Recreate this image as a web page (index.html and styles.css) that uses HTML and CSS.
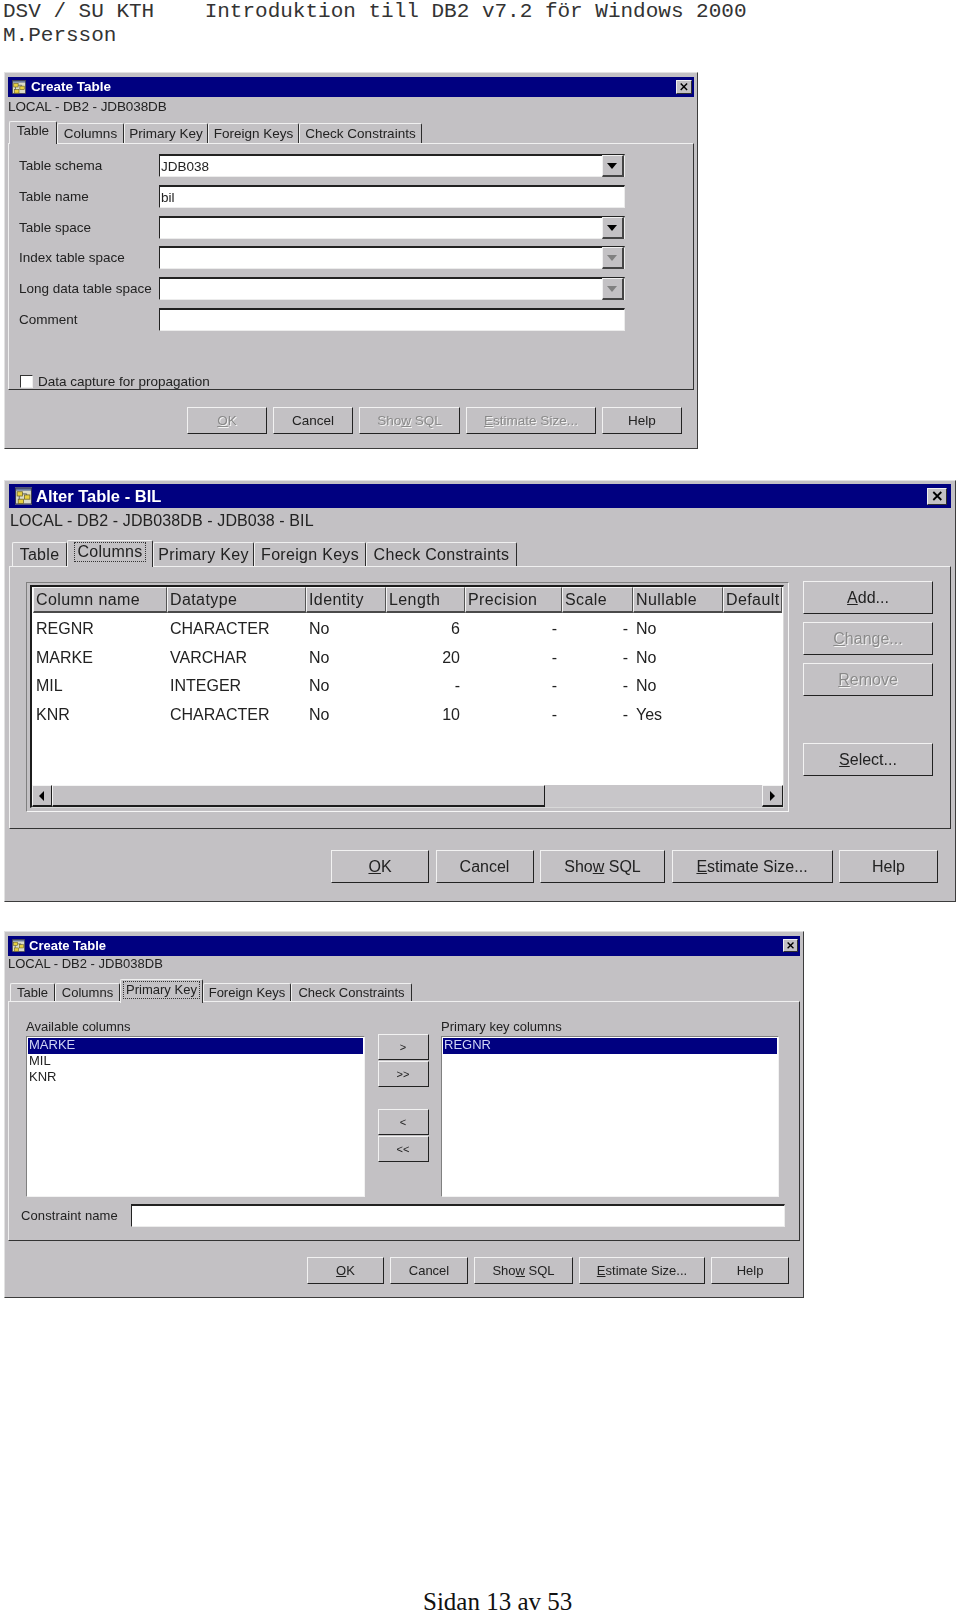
FILE: index.html
```html
<!DOCTYPE html>
<html lang="sv">
<head>
<meta charset="utf-8">
<title>Introduktion till DB2</title>
<link rel="stylesheet" href="styles.css">
</head>
<body>
<svg class="defs" width="0" height="0" aria-hidden="true">
  <symbol id="app" viewBox="0 0 16 16">
    <rect x="0" y="0" width="16" height="16" fill="#dcdcc8"/>
    <rect x="0" y="0" width="16" height="3" fill="#6a7a9a"/>
    <rect x="0.5" y="0.5" width="15" height="15" fill="none" stroke="#3a3a50"/>
    <rect x="2" y="4" width="5" height="4" fill="#e8d040" stroke="#6a6020" stroke-width="0.7"/>
    <rect x="9" y="7" width="5" height="4" fill="#e8d040" stroke="#6a6020" stroke-width="0.7"/>
    <rect x="3" y="11" width="5" height="4" fill="#e8d040" stroke="#6a6020" stroke-width="0.7"/>
    <path d="M4 8v3M7 6h4v1" fill="none" stroke="#505050" stroke-width="0.8"/>
  </symbol>
  <symbol id="x" viewBox="0 0 12 12">
    <path d="M2 2l8 8M10 2l-8 8" fill="none" stroke="#000" stroke-width="1.8"/>
  </symbol>
</svg>

<header class="page-head">
  <div class="head-line">DSV / SU KTH    Introduktion till DB2 v7.2 för Windows 2000</div>
  <div class="head-line">M.Persson</div>
</header>

<section class="win win-a">
  <div class="titlebar">
    <svg class="app-icon"><use href="#app"/></svg>
    <span class="title">Create Table</span>
    <span class="close"><svg><use href="#x"/></svg></span>
  </div>
  <div class="subtitle">LOCAL - DB2 - JDB038DB</div>
  <div class="tabs">
    <div class="tab active">Table</div>
    <div class="tab">Columns</div>
    <div class="tab">Primary Key</div>
    <div class="tab">Foreign Keys</div>
    <div class="tab">Check Constraints</div>
  </div>
  <div class="panel">
    <div class="form">
      <label>Table schema</label>
      <div class="field combo">JDB038<span class="drop"></span></div>
      <label>Table name</label>
      <div class="field">bil</div>
      <label>Table space</label>
      <div class="field combo"><span class="drop"></span></div>
      <label>Index table space</label>
      <div class="field combo"><span class="drop off"></span></div>
      <label>Long data table space</label>
      <div class="field combo"><span class="drop off"></span></div>
      <label>Comment</label>
      <div class="field"></div>
    </div>
    <div class="check-row"><span class="check"></span>Data capture for propagation</div>
  </div>
  <div class="actions">
    <button class="btn off"><u>O</u>K</button>
    <button class="btn">Cancel</button>
    <button class="btn off">Sho<u>w</u> SQL</button>
    <button class="btn off"><u>E</u>stimate Size...</button>
    <button class="btn">Help</button>
  </div>
</section>

<section class="win win-b">
  <div class="titlebar">
    <svg class="app-icon"><use href="#app"/></svg>
    <span class="title">Alter Table - BIL</span>
    <span class="close"><svg><use href="#x"/></svg></span>
  </div>
  <div class="subtitle">LOCAL - DB2 - JDB038DB - JDB038 - BIL</div>
  <div class="tabs">
    <div class="tab">Table</div>
    <div class="tab active"><span class="focus">Columns</span></div>
    <div class="tab">Primary Key</div>
    <div class="tab">Foreign Keys</div>
    <div class="tab">Check Constraints</div>
  </div>
  <div class="panel panel-row">
    <div class="tbl">
      <div class="tbl-inner">
        <div class="cols head">
          <div>Column name</div><div>Datatype</div><div>Identity</div><div>Length</div><div>Precision</div><div>Scale</div><div>Nullable</div><div>Default</div>
        </div>
        <div class="rows">
          <div class="cols"><div>REGNR</div><div>CHARACTER</div><div>No</div><div class="num">6</div><div class="num">-</div><div class="num">-</div><div>No</div><div></div></div>
          <div class="cols"><div>MARKE</div><div>VARCHAR</div><div>No</div><div class="num">20</div><div class="num">-</div><div class="num">-</div><div>No</div><div></div></div>
          <div class="cols"><div>MIL</div><div>INTEGER</div><div>No</div><div class="num">-</div><div class="num">-</div><div class="num">-</div><div>No</div><div></div></div>
          <div class="cols"><div>KNR</div><div>CHARACTER</div><div>No</div><div class="num">10</div><div class="num">-</div><div class="num">-</div><div>Yes</div><div></div></div>
        </div>
        <div class="scrollbar">
          <span class="sb-btn sb-left"></span>
          <span class="sb-thumb"></span>
          <span class="sb-track"></span>
          <span class="sb-btn sb-right"></span>
        </div>
      </div>
    </div>
    <div class="side">
      <button class="btn"><u>A</u>dd...</button>
      <button class="btn off"><u>C</u>hange...</button>
      <button class="btn off"><u>R</u>emove</button>
      <button class="btn side-last"><u>S</u>elect...</button>
    </div>
  </div>
  <div class="actions">
    <button class="btn"><u>O</u>K</button>
    <button class="btn">Cancel</button>
    <button class="btn">Sho<u>w</u> SQL</button>
    <button class="btn"><u>E</u>stimate Size...</button>
    <button class="btn">Help</button>
  </div>
</section>

<section class="win win-c">
  <div class="titlebar">
    <svg class="app-icon"><use href="#app"/></svg>
    <span class="title">Create Table</span>
    <span class="close"><svg><use href="#x"/></svg></span>
  </div>
  <div class="subtitle">LOCAL - DB2 - JDB038DB</div>
  <div class="tabs">
    <div class="tab">Table</div>
    <div class="tab">Columns</div>
    <div class="tab active"><span class="focus">Primary Key</span></div>
    <div class="tab">Foreign Keys</div>
    <div class="tab">Check Constraints</div>
  </div>
  <div class="panel">
    <div class="keys">
      <div class="key-col">
        <div class="key-label">Available columns</div>
        <div class="list">
          <div class="item selected">MARKE</div>
          <div class="item">MIL</div>
          <div class="item">KNR</div>
        </div>
      </div>
      <div class="movers">
        <button class="btn">&gt;</button>
        <button class="btn">&gt;&gt;</button>
        <button class="btn mover-gap">&lt;</button>
        <button class="btn">&lt;&lt;</button>
      </div>
      <div class="key-col">
        <div class="key-label">Primary key columns</div>
        <div class="list">
          <div class="item selected">REGNR</div>
        </div>
      </div>
    </div>
    <div class="constraint">
      <label>Constraint name</label>
      <div class="field"></div>
    </div>
  </div>
  <div class="actions">
    <button class="btn"><u>O</u>K</button>
    <button class="btn">Cancel</button>
    <button class="btn">Sho<u>w</u> SQL</button>
    <button class="btn"><u>E</u>stimate Size...</button>
    <button class="btn">Help</button>
  </div>
</section>

<footer class="page-foot">Sidan 13 av 53</footer>
</body>
</html>
```

FILE: styles.css
```css
* { box-sizing: border-box; }

html, body { margin: 0; padding: 0; background: #fff; }

body { height: 1613px; overflow: hidden; }

.defs { display: block; height: 0; }

.page-head {
  height: 47px;
  padding-left: 3px;
  font: 21px/24px "Liberation Mono", monospace;
  color: #333;
}

.head-line { white-space: pre; }

.page-foot {
  margin-top: 291px;
  padding-left: 423px;
  font: 25px/25px "Liberation Serif", serif;
  color: #111;
}

/* window frame */
.win {
  display: flex;
  flex-direction: column;
  margin-left: 4px;
  background: #c3c1c4;
  color: #222;
  font-family: "Liberation Sans", Arial, sans-serif;
  border-style: solid;
  border-width: 1px;
  border-color: #e2e2e2 #3c3c3c #3c3c3c #e2e2e2;
  padding: 3px 3px 3px 3px;
  filter: blur(0.3px);
}

.win-a { width: 694px; height: 377px; margin-top: 25px; font-size: 13.5px; }
.win-b { width: 952px; height: 422px; margin-top: 31px; font-size: 16px; padding: 3px 4px 4px 4px; }
.win-c { width: 800px; height: 367px; margin-top: 29px; font-size: 13px; }

/* title bar */
.titlebar {
  display: flex;
  align-items: center;
  flex: none;
  background: #000080;
  color: #fff;
  font-weight: bold;
}

.win-a .titlebar { height: 20px; margin-top: 1px; padding: 0 2px 1px 4px; font-size: 13.5px; }
.win-b .titlebar { height: 24px; padding: 0 4px 0 6px; font-size: 16.5px; }
.win-c .titlebar { height: 20px; margin-top: 1px; padding: 0 2px 1px 4px; font-size: 13px; }

.app-icon { flex: none; display: block; }
.win-a .app-icon { width: 14px; height: 14px; margin-right: 5px; }
.win-b .app-icon { width: 17px; height: 18px; margin-right: 4px; }
.win-c .app-icon { width: 13px; height: 13px; margin-right: 4px; }

.close {
  display: flex;
  align-items: center;
  justify-content: center;
  margin-left: auto;
  background: #c3c1c4;
  border: 1px solid;
  border-color: #f0f0f0 #303030 #303030 #f0f0f0;
}

.close svg { display: block; width: 70%; height: 80%; }
.win-a .close { width: 16px; height: 14px; }
.win-b .close { width: 20px; height: 17px; }
.win-c .close { width: 15px; height: 13px; }

.subtitle { flex: none; white-space: nowrap; }
.win-a .subtitle { height: 24px; line-height: 19px; letter-spacing: -0.1px; }
.win-b .subtitle { height: 32px; line-height: 26px; padding-left: 1px; letter-spacing: 0.1px; }
.win-c .subtitle { height: 23px; line-height: 16px; }

/* tabs */
.tabs { display: grid; align-items: end; flex: none; }
.win-a .tabs { height: 22px; padding-left: 1px; grid-template-columns: 48px 67px 84px 91px 123px; }
.win-b .tabs { height: 26px; padding-left: 3px; grid-template-columns: 55px 86px 101px 112px 151px; letter-spacing: 0.3px; }
.win-c .tabs { height: 22px; padding-left: 2px; grid-template-columns: 45px 65px 83px 88px 121px; }

.tab {
  display: flex;
  align-items: center;
  justify-content: center;
  white-space: nowrap;
  border-style: solid;
  border-width: 1px 1px 0 1px;
  border-color: #f0f0f0 #2c2c2c #f0f0f0 #f0f0f0;
  border-radius: 2px 2px 0 0;
}

.win-a .tab { height: 20px; }
.win-b .tab { height: 24px; }
.win-c .tab { height: 19px; padding-bottom: 2px; }

.tab.active {
  position: relative;
  z-index: 1;
  background: #c3c1c4;
  margin-bottom: -1px;
  align-items: flex-start;
}

.win-a .tab.active { height: 23px; padding-top: 1px; }
.win-b .tab.active { height: 27px; padding-top: 1px; }
.win-c .tab.active { height: 24px; padding-top: 1px; }

.focus {
  display: block;
  padding: 0 2px;
  border: 1px dotted #333;
}

.win-c .focus { padding: 0 2px 1px; }

/* tab panel */
.panel {
  display: flex;
  flex-direction: column;
  flex: none;
  overflow: hidden;
  border-style: solid;
  border-width: 1px;
  border-color: #f0f0f0 #333 #333 #f0f0f0;
}

.win-a .panel { width: 686px; height: 247px; }
.win-b .panel { width: 942px; height: 263px; }
.win-c .panel { width: 792px; height: 240px; }

.panel-row { flex-direction: row; align-items: flex-start; }

/* input fields */
.form {
  display: grid;
  grid-template-columns: 140px 466px;
  grid-auto-rows: 23px;
  row-gap: 7.8px;
  align-items: center;
  padding: 10px 0 0 10px;
  white-space: nowrap;
}

.field {
  position: relative;
  height: 23px;
  padding-left: 1px;
  background: #fff;
  line-height: 21px;
  border-style: solid;
  border-width: 2px 1px 1px 1px;
  border-color: #222 #ececec #ececec #222;
}

.drop {
  position: absolute;
  top: -1px;
  right: 0;
  bottom: -1px;
  width: 22px;
  background: #c3c1c4;
  border-style: solid;
  border-width: 1px 2px 2px 1px;
  border-color: #f0f0f0 #444 #444 #f0f0f0;
}

.drop::after {
  content: "";
  position: absolute;
  left: 4px;
  top: 7px;
  border-style: solid;
  border-width: 6px 5px 0;
  border-color: #000 transparent transparent;
}

.drop.off::after { border-top-color: #808080; }

.check-row {
  display: flex;
  align-items: center;
  margin-top: auto;
  margin-bottom: 0;
  padding-left: 11px;
  height: 16px;
  white-space: nowrap;
}

.check {
  width: 13px;
  height: 13px;
  margin-right: 5px;
  background: #fff;
  border-style: solid;
  border-width: 1px;
  border-color: #333 #eee #eee #333;
}

/* buttons */
.btn {
  display: block;
  padding: 0;
  margin: 0;
  font: inherit;
  color: #222;
  background: #c3c1c4;
  white-space: nowrap;
  border-style: solid;
  border-width: 1px;
  border-color: #f2f2f2 #222 #222 #f2f2f2;
}

.btn.off { color: #8a8a8a; text-shadow: 1px 1px 0 #f4f4f4; }

.actions { display: grid; justify-content: end; flex: none; }
.win-a .actions { margin-top: 17px; padding-right: 12px; column-gap: 6px; grid-template-columns: 80px 80px 101px 130px 80px; grid-auto-rows: 27px; }
.win-b .actions { margin-top: 21px; padding-right: 13px; column-gap: 6.5px; grid-template-columns: 98px 98px 125px 161px 99px; grid-auto-rows: 33px; }
.win-c .actions { margin-top: 16px; padding-right: 11px; column-gap: 6px; grid-template-columns: 77px 78px 99px 126px 78px; grid-auto-rows: 27px; }

/* column table */
.tbl {
  flex: none;
  width: 763px;
  height: 230px;
  margin: 15px 0 0 16px;
  padding: 2px 4px 3px 3px;
  border: 1px solid;
  border-color: #808080 #f6f6f6 #f6f6f6 #808080;
}

.tbl-inner {
  display: flex;
  flex-direction: column;
  height: 100%;
  background: #fff;
  border-style: solid;
  border-width: 2px 1px 1px 2px;
  border-color: #1c1c1c #d8d8d8 #d8d8d8 #1c1c1c;
}

.cols {
  display: grid;
  grid-template-columns: 134px 139px 80px 79px 97px 71px 90px 59px;
  padding-left: 1px;
}

.head { flex: none; height: 26px; background: #fff; letter-spacing: 0.4px; }

.head > div {
  padding-left: 2px;
  line-height: 23px;
  background: #c3c1c4;
  white-space: nowrap;
  border-style: solid;
  border-width: 1px 1px 2px 1px;
  border-color: #f4f4f4 #555 #4a4a4a #f4f4f4;
}

.rows {
  flex: none;
  height: 170px;
  padding-top: 2px;
  display: grid;
  grid-auto-rows: 28.5px;
  align-content: start;
}

.rows .cols > div { padding-left: 3px; line-height: 28px; }
.rows .cols > div.num { padding: 0 5px 0 0; text-align: right; }

.scrollbar {
  display: flex;
  flex: none;
  height: 22px;
  margin-top: 2px;
  background: #c8c6c9;
}

.sb-btn, .sb-thumb {
  flex: none;
  position: relative;
  background: #c3c1c4;
  border-style: solid;
  border-width: 1px 1px 2px 1px;
  border-color: #f4f4f4 #1c1c1c #1c1c1c #f4f4f4;
}

.sb-left { width: 20px; }
.sb-right { width: 21px; }
.sb-thumb { width: 493px; }
.sb-track { flex: 1; }

.sb-btn::after {
  content: "";
  position: absolute;
  top: 5px;
  border-style: solid;
}

.sb-left::after { left: 6px; border-width: 5px 5px 5px 0; border-color: transparent #000 transparent transparent; }
.sb-right::after { left: 7px; border-width: 5px 0 5px 5px; border-color: transparent transparent transparent #000; }

.side {
  display: flex;
  flex-direction: column;
  flex: none;
  width: 130px;
  gap: 8px;
  margin: 14px 0 0 14px;
}

.side .btn { height: 33px; }
.side .side-last { margin-top: 39px; }

/* primary key page */
.keys {
  display: grid;
  grid-template-columns: 339px 51px 338px;
  column-gap: 12.5px;
  margin: 17px 0 0 17px;
}

.key-label { height: 17px; line-height: 15px; white-space: nowrap; }

.list {
  height: 161px;
  padding: 1px;
  background: #fff;
  border: 1px solid;
  border-color: #808080 #f2f2f2 #f2f2f2 #808080;
}

.item { height: 15.5px; line-height: 13px; padding-left: 1px; }
.item.selected { background: #000080; color: #cfd4f4; height: 16px; line-height: 14px; }

.movers {
  display: grid;
  grid-template-rows: 26px 26px 20px 26px 26px;
  row-gap: 1px;
  padding-top: 15px;
  font-size: 11px;
}

.movers .mover-gap { grid-row: 4; }
.movers .mover-gap + .btn { grid-row: 5; }

.constraint {
  display: grid;
  grid-template-columns: 110px 654px;
  align-items: center;
  margin: 7px 0 0 12px;
  white-space: nowrap;
  letter-spacing: 0.1px;
}
```
